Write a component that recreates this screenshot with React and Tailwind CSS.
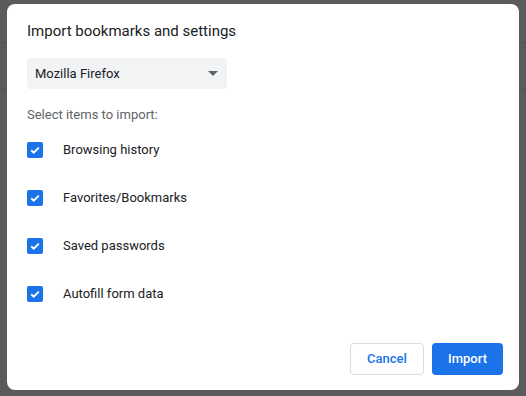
import { useState } from 'react';

const items = ['Browsing history', 'Favorites/Bookmarks', 'Saved passwords', 'Autofill form data'];

function Checkbox({ checked, onChange }) {
  return (
    <button
      onClick={onChange}
      className={`w-4 h-4 rounded-[2px] flex items-center justify-center shrink-0 ${
        checked ? 'bg-[#1a73e8]' : 'border-2 border-[#5f6368] bg-white'
      }`}
    >
      {checked && (
        <svg width="12" height="12" viewBox="0 0 12 12">
          <path d="M2.2 6.2 L4.8 8.7 L9.8 3.6" fill="none" stroke="white" strokeWidth="1.9" />
        </svg>
      )}
    </button>
  );
}

export default function App() {
  const [checked, setChecked] = useState(items.map(() => true));

  const toggle = (i) => setChecked(checked.map((c, j) => (j === i ? !c : c)));

  return (
    <div className="relative h-[396px] w-[526px] overflow-hidden bg-[#5b5b5b] font-['Roboto',sans-serif]">
      {/* page behind the dialog, dimmed */}
      <div className="flex flex-col text-[#3a3a3a] text-[13px]">
        <div className="h-[43px] flex items-center -ml-[52px] border-b border-[#545454]">Settings</div>
        <div className="h-[47px] flex items-center -ml-[44px] border-b border-[#545454]">Go to</div>
      </div>

      <div className="absolute left-[7px] top-[4px] w-[512px] h-[386px] bg-white rounded-lg flex flex-col pl-5 pt-[17px]">
        <h2 className="text-[15px] leading-5 text-[#202124]">Import bookmarks and settings</h2>

        <div className="mt-[17px] w-[200px] h-[31px] bg-[#f1f3f4] rounded flex items-center justify-between pl-2 pr-[9px]">
          <span className="text-[13px] text-[#202124]">Mozilla Firefox</span>
          <svg width="10" height="5" viewBox="0 0 10 5">
            <path d="M0 0 L10 0 L5 5 Z" fill="#5f6368" />
          </svg>
        </div>

        <p className="mt-4 text-[13px] leading-5 text-[#5f6368]">Select items to import:</p>

        <div className="mt-px flex flex-col">
          {items.map((label, i) => (
            <label key={label} className="h-12 flex items-center gap-5 cursor-pointer">
              <Checkbox checked={checked[i]} onChange={() => toggle(i)} />
              <span className="text-[13px] text-[#202124]">{label}</span>
            </label>
          ))}
        </div>

        <div className="mt-auto flex justify-end gap-2 pr-4 pb-[15px]">
          <button className="w-[74px] h-8 rounded border border-[#dadce0] text-[13px] font-medium text-[#1a73e8]">
            Cancel
          </button>
          <button className="w-[71px] h-8 rounded bg-[#1a73e8] text-[13px] font-medium text-white">
            Import
          </button>
        </div>
      </div>
    </div>
  );
}
